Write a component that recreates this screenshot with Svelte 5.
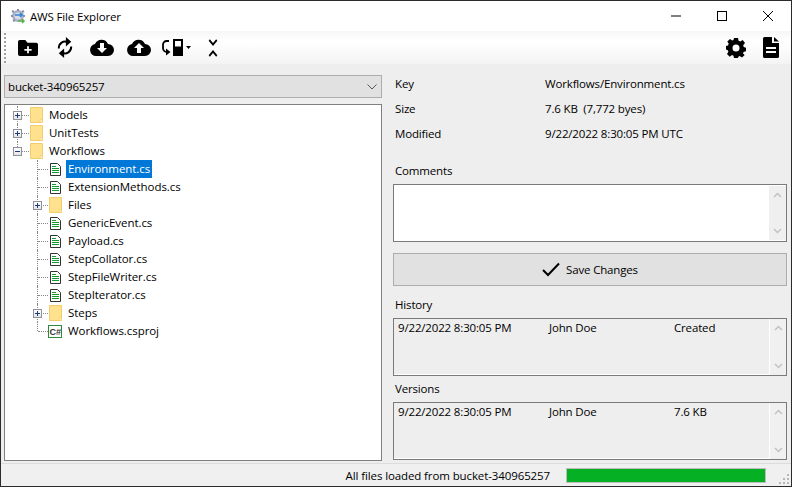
<script>
  const tree = [
    { name: 'Models', kind: 'folder', depth: 0, toggle: 'plus' },
    { name: 'UnitTests', kind: 'folder', depth: 0, toggle: 'plus' },
    { name: 'Workflows', kind: 'folder', depth: 0, toggle: 'minus' },
    { name: 'Environment.cs', kind: 'file', depth: 1, selected: true },
    { name: 'ExtensionMethods.cs', kind: 'file', depth: 1 },
    { name: 'Files', kind: 'folder', depth: 1, toggle: 'plus' },
    { name: 'GenericEvent.cs', kind: 'file', depth: 1 },
    { name: 'Payload.cs', kind: 'file', depth: 1 },
    { name: 'StepCollator.cs', kind: 'file', depth: 1 },
    { name: 'StepFileWriter.cs', kind: 'file', depth: 1 },
    { name: 'StepIterator.cs', kind: 'file', depth: 1 },
    { name: 'Steps', kind: 'folder', depth: 1, toggle: 'plus' },
    { name: 'Workflows.csproj', kind: 'proj', depth: 1 }
  ];
</script>

{#snippet scrollbar()}
  <div class="scroll">
    <svg width="9" height="6" viewBox="0 0 9 6"><path d="M1 5l3.500-3.500L8 5" /></svg>
    <svg width="9" height="6" viewBox="0 0 9 6"><path d="M1 1l3.500 3.500L8 1" /></svg>
  </div>
{/snippet}

<div class="window">
  <header class="titlebar">
    <svg class="app-icon" width="17" height="17" viewBox="0 0 17 17">
      <circle cx="8" cy="8" r="6" fill="#a9afc4" />
      <circle cx="8" cy="8" r="3.500" fill="#d7dbe6" />
      <path d="M2 3l2 1M14 3l-2 1M1 8h2M15 8h-2M8 1v2M3 13l2-1" stroke="#8a90aa" stroke-width="2" />
      <path d="M5 7h7M10 5l2 2-2 2" stroke="#2f86d6" stroke-width="1.500" fill="none" />
      <path d="M8 13h6M12 11l2 2-2 2" stroke="#58b04a" stroke-width="1.500" fill="none" />
    </svg>
    <span class="title">AWS File Explorer</span>
    <div class="controls">
      <svg width="46" height="30" viewBox="0 0 46 30"><path d="M18 15h10" /></svg>
      <svg width="46" height="30" viewBox="0 0 46 30"><rect x="18.500" y="10.500" width="9" height="9" /></svg>
      <svg width="46" height="30" viewBox="0 0 46 30"><path d="M18 10l10 10M28 10l-10 10" /></svg>
    </div>
  </header>

  <div class="toolbar">
    <div class="grip"></div>
    <svg class="tool" style="margin-left:12px" width="20" height="16" viewBox="0 0 22 18" preserveAspectRatio="none">
      <path fill-rule="evenodd" d="M2 0h6l2.500 3H20a2 2 0 0 1 2 2v11a2 2 0 0 1-2 2H2a2 2 0 0 1-2-2V2a2 2 0 0 1 2-2zM10 7v3H7v2h3v3h2v-3h3v-2h-3V7z" />
    </svg>
    <svg class="tool" style="margin-left:19px" width="16" height="21" viewBox="0 0 18 22" preserveAspectRatio="none">
      <path fill="none" stroke="#000" stroke-width="2.200" d="M2 12a7 7 0 0 1 10-6.500M16 10a7 7 0 0 1-10 6.500" />
      <path d="M10 0v10l6-5zM8 22V12l-6 5z" />
    </svg>
    <svg class="tool" style="margin-left:17px" width="24" height="17" viewBox="0 0 24 17">
      <path fill-rule="evenodd" d="M6 17a6 6 0 0 1-1-11.900A7 7 0 0 1 18 5a6 6 0 0 1 0 12zM10 4v5H7l5 5 5-5h-3V4z" />
    </svg>
    <svg class="tool" style="margin-left:13px" width="24" height="17" viewBox="0 0 24 17">
      <path fill-rule="evenodd" d="M6 17a6 6 0 0 1-1-11.900A7 7 0 0 1 18 5a6 6 0 0 1 0 12zM12 4L7 9h3v5h4V9h3z" />
    </svg>
    <svg class="tool" style="margin-left:10px" width="31" height="20" viewBox="0 0 31 20">
      <path fill="none" stroke="#000" stroke-width="1.800" d="M8 3H5.500A3.500 3.500 0 0 0 2 6.500V10a4 4 0 0 0 4 4" />
      <path d="M5 17.500V10.500l4.500 3.500z" />
      <path fill-rule="evenodd" d="M12 1h10v17H12zM14 3v5.500h6V3z" />
      <path d="M25 8h5l-2.500 3z" />
    </svg>
    <svg class="tool" style="margin-left:16px" width="10" height="18" viewBox="0 0 12 18" preserveAspectRatio="none">
      <path fill="none" stroke="#000" stroke-width="2" d="M1.500 1l4.500 4.500L10.500 1M1.500 17L6 12.500l4.500 4.500" />
    </svg>
    <span class="spacer"></span>
    <svg class="tool" width="20" height="20" viewBox="0 0 20 20">
      <path fill-rule="evenodd" d="M8 0h4l.6 2.800 1.700.7L16.700 2 19 5l-1.800 2.200.5 1.800 2.300.8v3.400l-2.500.8-.5 1.600L18.700 17 16 19.500l-2.300-1.400-1.300.6L12 20H8l-.5-2.300-1.500-.6L3.700 18.700 1 16l1.400-2.200-.6-1.500L0 11.500V8l2-.5.700-1.700L1.300 3.500 4 1l2.200 1.500 1.300-.5zM10 6.500a3.500 3.500 0 1 0 0 7 3.500 3.500 0 0 0 0-7z" />
    </svg>
    <svg class="tool" style="margin-left:17px;margin-right:12px" width="16" height="21" viewBox="0 0 16 21">
      <path fill-rule="evenodd" d="M1.500 0H9v6h7v13.500a1.500 1.500 0 0 1-1.500 1.500h-13A1.500 1.500 0 0 1 0 19.500v-18A1.500 1.500 0 0 1 1.500 0zM3 10v2h10v-2zM3 14v2h10v-2z" />
      <path d="M11 0l5 4.500h-5z" />
    </svg>
  </div>

  <main class="body">
    <section class="left">
      <div class="combo">
        <span>bucket-340965257</span>
        <svg width="10" height="6" viewBox="0 0 10 6"><path d="M.5.500L5 5 9.500.500" /></svg>
      </div>
      <div class="tree">
        {#each tree as node, i}
          <div class="node" class:nested={node.depth === 1}>
            <span class="rail" class:last={i === 2 || node.name === 'Workflows.csproj'}></span>
            {#if node.depth === 1}<span class="hline"></span>{:else}<span class="hline root"></span>{/if}
            {#if node.toggle}
              <span class="toggle">
                <i class="h"></i>{#if node.toggle === 'plus'}<i class="v"></i>{/if}
              </span>
            {/if}
            <span class="slot">
              {#if node.kind === 'folder'}
                <svg class="icon" width="13" height="16" viewBox="0 0 13 16">
                  <path d="M.5.500h12v15H.5z" fill="#ffe18e" stroke="#f1cd6d" />
                  <path d="M10 13v2.500h2.500V12z" fill="#fff0c0" stroke="#f1cd6d" stroke-width=".8" />
                </svg>
              {:else if node.kind === 'file'}
                <svg class="icon file" width="11" height="13" viewBox="0 0 11 13">
                  <path d="M.5.500h7l3 3v9H.5z" fill="#fff" stroke="#333" />
                  <path d="M2 3.500h4M2 5.500h7M2 7.500h7M2 9.500h7" stroke="#0f9a2c" />
                </svg>
              {:else}
                <svg class="icon proj" width="14" height="13" viewBox="0 0 14 13">
                  <rect x=".5" y=".5" width="13" height="12" fill="#fff" stroke="#2c8a3c" />
                  <text x="1.500" y="9.500" font-size="9" font-weight="700" letter-spacing="0" fill="#333" font-family="'Liberation Sans', sans-serif">C#</text>
                </svg>
              {/if}
            </span>
            <span class="label" class:selected={node.selected}>{node.name}</span>
          </div>
        {/each}
      </div>
    </section>

    <section class="right">
      <dl class="props">
        <dt>Key</dt><dd>Workflows/Environment.cs</dd>
        <dt>Size</dt><dd>7.6 KB &nbsp;(7,772 byes)</dd>
        <dt>Modified</dt><dd>9/22/2022 8:30:05 PM UTC</dd>
      </dl>

      <div class="caption comments-cap">Comments</div>
      <div class="box comments">{@render scrollbar()}</div>

      <div class="save">
        <svg width="18" height="15" viewBox="0 0 18 15"><path d="M1 8l5 5L17 1.500" /></svg>
        <span>Save Changes</span>
      </div>

      <div class="caption history-cap">History</div>
      <div class="box list">
        <div class="row"><span>9/22/2022 8:30:05 PM</span><span>John Doe</span><span>Created</span></div>
        {@render scrollbar()}
      </div>

      <div class="caption versions-cap">Versions</div>
      <div class="box list versions">
        <div class="row"><span>9/22/2022 8:30:05 PM</span><span>John Doe</span><span>7.6 KB</span></div>
        {@render scrollbar()}
      </div>
    </section>
  </main>

  <footer class="status">
    <span>All files loaded from bucket-340965257</span>
    <div class="progress"></div>
    <svg class="resize" width="10" height="10" viewBox="0 0 10 10">
      <path d="M8 0h2v2H8zM4 4h2v2H4zM8 4h2v2H8zM0 8h2v2H0zM4 8h2v2H4zM8 8h2v2H8z" />
    </svg>
  </footer>
</div>

<style>
  :global(body) {
    margin: 0;
  }

  .window {
    width: 792px;
    height: 487px;
    box-sizing: border-box;
    display: flex;
    flex-direction: column;
    overflow: hidden;
    background: #eeeeee;
    border: 1px solid #2b2b2b;
    font-family: "Open Sans", "Noto Sans", sans-serif;
    font-size: 11.500px;
    letter-spacing: -0.16px;
    color: #000;
  }

  .titlebar {
    height: 30px;
    flex: none;
    display: flex;
    align-items: center;
    background: #fff;
  }

  .app-icon {
    margin-left: 9px;
  }

  .title {
    margin-left: 3px;
  }

  .controls {
    margin-left: auto;
    display: flex;
  }

  .controls svg {
    fill: none;
    stroke: #000;
    stroke-width: 1;
  }

  .toolbar {
    height: 33px;
    flex: none;
    display: flex;
    align-items: center;
    background: linear-gradient(#f6f6f6, #ffffff 30%, #f4f4f4);
  }

  .grip {
    width: 2px;
    height: 30px;
    margin-left: 3px;
    background: repeating-linear-gradient(#a0a0a0 0 2px, transparent 2px 4px);
  }

  .tool {
    flex: none;
  }

  .spacer {
    flex: 1;
  }

  .body {
    flex: 1;
    display: flex;
    min-height: 0;
    padding: 11px 4px 2px 3px;
    gap: 11px;
  }

  .left {
    width: 378px;
    flex: none;
    display: flex;
    flex-direction: column;
    gap: 6px;
  }

  .combo {
    height: 23px;
    flex: none;
    box-sizing: border-box;
    display: flex;
    align-items: center;
    justify-content: space-between;
    padding: 0 4px 0 3px;
    background: #e1e1e1;
    border: 1px solid #adadad;
  }

  .combo svg {
    fill: none;
    stroke: #555;
  }

  .tree {
    flex: 1;
    box-sizing: border-box;
    background: #fff;
    border: 1px solid #808080;
    padding-top: 1px;
  }

  .node {
    position: relative;
    height: 18px;
    display: flex;
    align-items: center;
    padding-left: 25px;
  }

  .node.nested {
    padding-left: 44px;
  }

  .rail {
    position: absolute;
    left: 12px;
    top: 0;
    bottom: 0;
    border-left: 1px dotted #888;
  }

  .node.nested .rail {
    left: 32px;
  }

  .rail.last {
    bottom: 9px;
  }

  .hline {
    position: absolute;
    left: 33px;
    width: 10px;
    top: 9px;
    border-top: 1px dotted #888;
  }

  .hline.root {
    left: 13px;
    width: 11px;
  }

  .toggle {
    position: absolute;
    left: 8px;
    top: 5px;
    width: 9px;
    height: 9px;
    box-sizing: border-box;
    background: linear-gradient(#fff, #e4e4e4);
    border: 1px solid #8f8f9e;
  }

  .node.nested .toggle {
    left: 28px;
  }

  .toggle .h,
  .toggle .v {
    position: absolute;
    background: #1c3c78;
  }

  .toggle .h {
    left: 1px;
    top: 3px;
    width: 5px;
    height: 1px;
  }

  .toggle .v {
    left: 3px;
    top: 1px;
    width: 1px;
    height: 5px;
  }

  .slot {
    width: 17px;
    flex: none;
    display: flex;
    align-items: center;
    position: relative;
    background: #fff;
  }

  .icon {
    flex: none;
  }

  .icon.file {
    margin-left: 1px;
  }

  .icon.proj {
    margin-left: -1px;
  }

  .label {
    padding: 0 2px;
    height: 18px;
    line-height: 18px;
    white-space: nowrap;
    letter-spacing: -0.06px;
  }

  .label.selected {
    background: #0078d7;
    color: #fff;
  }

  .right {
    flex: 1;
    display: flex;
    flex-direction: column;
    min-width: 0;
  }

  .props {
    margin: 0;
    padding: 0 0 0 2px;
    display: grid;
    grid-template-columns: 150px 1fr;
    grid-auto-rows: 25px;
    line-height: 18px;
  }

  .props dd {
    margin: 0;
  }

  .caption {
    padding-left: 2px;
    line-height: 18px;
  }

  .comments-cap {
    margin-top: 12px;
  }

  .history-cap {
    margin-top: 10px;
  }

  .versions-cap {
    margin-top: 4px;
  }

  .box {
    position: relative;
    box-sizing: border-box;
    border: 1px solid #7a7a7a;
    display: flex;
  }

  .comments {
    height: 58px;
    background: #fff;
    margin-top: 4px;
  }

  .save {
    height: 33px;
    margin-top: 11px;
    flex: none;
    box-sizing: border-box;
    display: flex;
    align-items: center;
    justify-content: center;
    gap: 6px;
    background: #e1e1e1;
    border: 1px solid #adadad;
  }

  .save svg {
    fill: none;
    stroke: #000;
    stroke-width: 2;
  }

  .list {
    height: 58px;
    margin-top: 4px;
    box-shadow: inset 0 -1px #fff;
  }

  .row {
    flex: 1;
    display: grid;
    grid-template-columns: 151px 125px 1fr;
    padding: 1px 0 0 4px;
    line-height: 16px;
    height: 18px;
  }

  .scroll {
    margin-left: auto;
    width: 17px;
    flex: none;
    display: flex;
    flex-direction: column;
    justify-content: space-between;
    align-items: center;
    padding: 6px 0;
    box-sizing: border-box;
    background: #f0f0f0;
    border-left: 1px solid #fff;
  }

  .comments .scroll {
    background: #efefef;
    margin: 1px 0 1px auto;
    border-left: 0;
  }

  .scroll svg {
    fill: none;
    stroke: #c2c2c2;
    stroke-width: 1.500;
  }

  .status {
    height: 22px;
    flex: none;
    position: relative;
    display: flex;
    align-items: center;
    justify-content: flex-end;
    padding-right: 25px;
    gap: 16px;
    border-top: 1px solid #dcdcdc;
    background: #f0f0f0;
    letter-spacing: -0.11px;
  }

  .progress {
    width: 200px;
    height: 15px;
    box-sizing: border-box;
    background: #06b025;
    border: 1px solid #bcbcbc;
  }

  .resize {
    position: absolute;
    right: 2px;
    bottom: 2px;
    fill: #b8b8b8;
  }
</style>
